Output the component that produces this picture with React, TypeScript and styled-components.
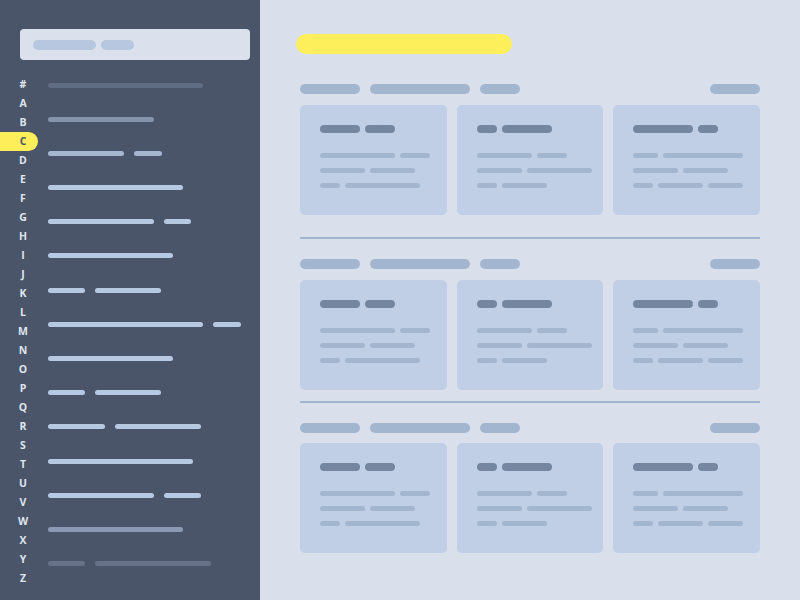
import React from 'react';
import styled, { createGlobalStyle } from 'styled-components';

const Global = createGlobalStyle`
  html, body { margin: 0; padding: 0; }
  body { font-family: "Open Sans", "DejaVu Sans", sans-serif; background: #d9e0eb; }
  #root { width: 800px; height: 600px; }
`;

const Page = styled.div`
  display: grid;
  grid-template-columns: 260px minmax(0, 1fr);
  width: 800px;
  height: 600px;
  overflow: hidden;
`;

const Sidebar = styled.aside`
  background: #4a5569;
  display: flex;
  flex-direction: column;
  padding-top: 29px;
`;

const Search = styled.div`
  margin: 0 10px 0 20px;
  height: 31px;
  box-sizing: border-box;
  padding: 0 13px;
  background: #dae1ec;
  border-radius: 4px;
  display: flex;
  align-items: center;
  gap: 5px;
`;

const SearchPill = styled.span<{ $w: number }>`
  width: ${p => p.$w}px;
  height: 10px;
  border-radius: 5px;
  background: #b7c7df;
`;

const Directory = styled.div`
  display: flex;
  margin-top: 15px;
`;

const Letters = styled.ul`
  list-style: none;
  margin: 0;
  padding: 0;
  width: 38px;
  display: flex;
  flex-direction: column;
`;

const Letter = styled.li<{ $active?: boolean }>`
  height: 19px;
  line-height: 19px;
  padding-left: 8px;
  text-align: center;
  font-size: 10.5px;
  font-weight: 700;
  color: ${p => (p.$active ? '#4a5569' : '#dfe5ef')};
  background: ${p => (p.$active ? '#fdee5a' : 'transparent')};
  border-radius: 0 10px 10px 0;
`;

const Entries = styled.div`
  display: flex;
  flex-direction: column;
  gap: 29.2px;
  padding-top: 7.5px;
  margin-left: 10px;
`;

const Entry = styled.div<{ $o: number }>`
  display: flex;
  gap: 10px;
  height: 5px;
  opacity: ${p => p.$o};
`;

const EntryPill = styled.span<{ $w: number }>`
  flex-shrink: 0;
  width: ${p => p.$w}px;
  height: 5px;
  border-radius: 2.5px;
  background: #b7c8e2;
`;

const Main = styled.main`
  min-width: 0;
  padding: 34px 40px 0;
  display: flex;
  flex-direction: column;
`;

const Headline = styled.div`
  width: 216px;
  height: 20px;
  border-radius: 10px;
  background: #fdef5c;
  margin-left: -4px;
  margin-bottom: 30px;
`;

const Section = styled.section`
  display: flex;
  flex-direction: column;
  gap: 10.5px;
`;

const SectionHeader = styled.div`
  display: flex;
  gap: 10px;
`;

const HeaderPill = styled.span<{ $w: number; $end?: boolean }>`
  width: ${p => p.$w}px;
  height: 10px;
  border-radius: 5px;
  background: #a3b6d0;
  margin-left: ${p => (p.$end ? 'auto' : '0')};
`;

const CardGrid = styled.div`
  display: grid;
  grid-template-columns: repeat(3, minmax(0, 1fr));
  gap: 10px;
`;

const Card = styled.div`
  min-width: 0;
  height: 110px;
  box-sizing: border-box;
  padding: 20px;
  background: #c0cfe6;
  border-radius: 5px;
  display: flex;
  flex-direction: column;
`;

const CardTitle = styled.div`
  display: flex;
  gap: 5px;
  margin-bottom: 20px;
`;

const TitlePill = styled.span<{ $w: number }>`
  flex-shrink: 0;
  width: ${p => p.$w}px;
  height: 8px;
  border-radius: 4px;
  background: #7586a1;
`;

const CardLines = styled.div`
  display: flex;
  flex-direction: column;
  gap: 10px;
`;

const CardLine = styled.div`
  display: flex;
  gap: 5px;
`;

const LinePill = styled.span<{ $w: number }>`
  flex-shrink: 0;
  width: ${p => p.$w}px;
  height: 5px;
  border-radius: 2.5px;
  background: #a3b5cf;
`;

const Divider = styled.hr<{ $space: number }>`
  border: 0;
  height: 2px;
  background: #a3b6d0;
  margin: ${p => p.$space}px 0 20px;
`;

const letters = ['#', ...'ABCDEFGHIJKLMNOPQRSTUVWXYZ'.split('')];

const entries: { w: number[]; o: number }[] = [
  { w: [155], o: 0.2 },
  { w: [106], o: 0.55 },
  { w: [76, 28], o: 0.85 },
  { w: [135], o: 1 },
  { w: [106, 27], o: 1 },
  { w: [125], o: 1 },
  { w: [37, 66], o: 1 },
  { w: [155, 28], o: 1 },
  { w: [125], o: 1 },
  { w: [37, 66], o: 1 },
  { w: [57, 86], o: 1 },
  { w: [145], o: 1 },
  { w: [106, 37], o: 1 },
  { w: [135], o: 0.6 },
  { w: [37, 116], o: 0.25 },
];

const cards: { title: number[]; lines: number[][] }[] = [
  { title: [40, 30], lines: [[75, 30], [45, 45], [20, 75]] },
  { title: [20, 50], lines: [[55, 30], [45, 65], [20, 45]] },
  { title: [60, 20], lines: [[25, 80], [45, 45], [20, 45, 35]] },
];

const CardSection: React.FC = () => (
  <Section>
    <SectionHeader>
      <HeaderPill $w={60} />
      <HeaderPill $w={100} />
      <HeaderPill $w={40} />
      <HeaderPill $w={50} $end />
    </SectionHeader>
    <CardGrid>
      {cards.map((c, i) => (
        <Card key={i}>
          <CardTitle>
            {c.title.map((w, j) => (
              <TitlePill key={j} $w={w} />
            ))}
          </CardTitle>
          <CardLines>
            {c.lines.map((row, r) => (
              <CardLine key={r}>
                {row.map((w, j) => (
                  <LinePill key={j} $w={w} />
                ))}
              </CardLine>
            ))}
          </CardLines>
        </Card>
      ))}
    </CardGrid>
  </Section>
);

export default function App() {
  return (
    <>
      <Global />
      <Page>
        <Sidebar>
          <Search>
            <SearchPill $w={63} />
            <SearchPill $w={33} />
          </Search>
          <Directory>
            <Letters>
              {letters.map(l => (
                <Letter key={l} $active={l === 'C'}>
                  {l}
                </Letter>
              ))}
            </Letters>
            <Entries>
              {entries.map((e, i) => (
                <Entry key={i} $o={e.o}>
                  {e.w.map((w, j) => (
                    <EntryPill key={j} $w={w} />
                  ))}
                </Entry>
              ))}
            </Entries>
          </Directory>
        </Sidebar>
        <Main>
          <Headline />
          <CardSection />
          <Divider $space={22.5} />
          <CardSection />
          <Divider $space={11} />
          <CardSection />
        </Main>
      </Page>
    </>
  );
}
